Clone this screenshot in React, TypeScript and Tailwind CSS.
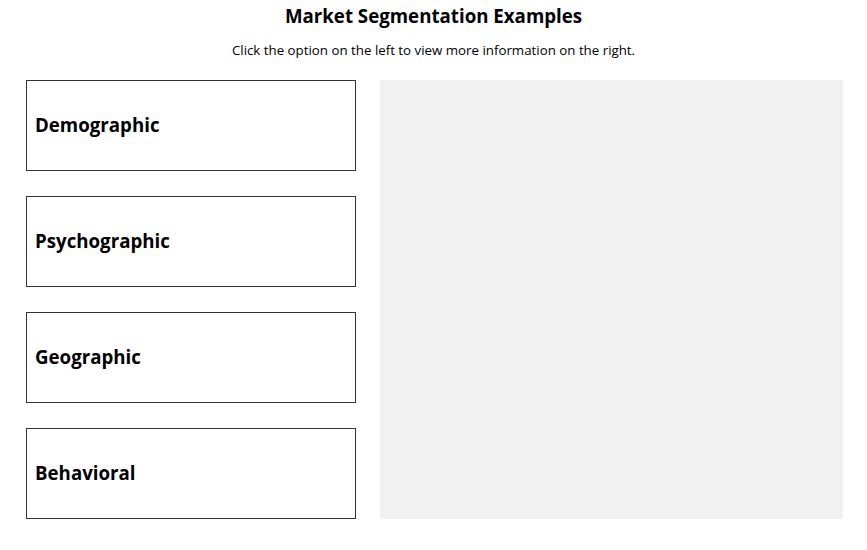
const options = ["Demographic", "Psychographic", "Geographic", "Behavioral"];

export default function App() {
  return (
    <div className="w-[867px] h-[550px] bg-white text-black font-['Open_Sans',sans-serif]">
      <h1 className="pt-[2px] text-center text-[18.7px] leading-7 font-bold">
        Market Segmentation Examples
      </h1>
      <p className="mt-[10px] text-center text-[13.3px] leading-5">
        Click the option on the left to view more information on the right.
      </p>
      <div className="mt-[20px] ml-[26px] flex gap-[24px]">
        <div className="flex w-[330px] flex-col gap-[25px]">
          {options.map((o) => (
            <button
              key={o}
              className="flex h-[91px] items-center border border-[#333] bg-white px-[8px] text-left text-[18.7px] font-bold"
            >
              {o}
            </button>
          ))}
        </div>
        <div className="h-[439px] w-[463px] bg-[#f1f1f1]" />
      </div>
    </div>
  );
}
